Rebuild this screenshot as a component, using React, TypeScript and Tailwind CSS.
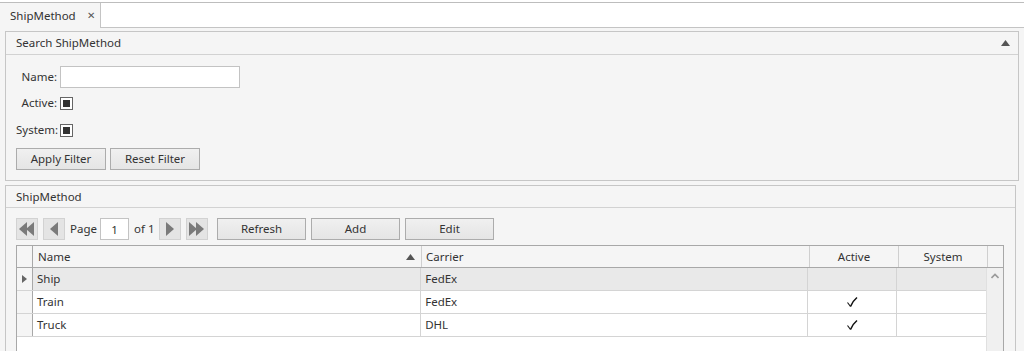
import React from "react";

const font = { fontFamily: '"Noto Sans", "Open Sans", sans-serif' };

function PagerButton({ dir, double }: { dir: "left" | "right"; double?: boolean }) {
  const tri = (x: number) =>
    dir === "left" ? `M${x + 8} 3 L${x} 10 L${x + 8} 17 Z` : `M${x} 3 L${x + 8} 10 L${x} 17 Z`;
  return (
    <button className="w-[22px] h-[22px] bg-[#e4e4e4] border border-[#d2d2d2] flex items-center justify-center">
      <svg width="20" height="20" viewBox="0 0 20 20">
        {double ? (
          <>
            <path d={tri(2)} fill="#7a7a7a" />
            <path d={tri(9)} fill="#7a7a7a" />
          </>
        ) : (
          <path d={tri(6)} fill="#7a7a7a" />
        )}
      </svg>
    </button>
  );
}

function Btn({ label, w }: { label: string; w: string }) {
  return (
    <button
      className={`${w} h-[22px] border border-[#acacac] bg-gradient-to-b from-[#f0f0f0] to-[#e5e5e5] text-[11.5px] text-[#333] leading-none`}
    >
      {label}
    </button>
  );
}

function Check() {
  return (
    <svg width="12" height="12" viewBox="0 0 12 12">
      <path d="M1.5 6.5 L4.5 10.5" stroke="#111" strokeWidth="1.1" fill="none" />
      <path d="M4.5 10.5 C6.5 6 8.5 3.5 11 1.5" stroke="#111" strokeWidth="1.6" fill="none" />
    </svg>
  );
}

function CheckBox() {
  return (
    <span className="w-[13px] h-[13px] bg-white border border-[#666] flex items-center justify-center">
      <span className="w-[7px] h-[7px] bg-[#333]" />
    </span>
  );
}

const rows = [
  { name: "Ship", carrier: "FedEx", active: false, current: true },
  { name: "Train", carrier: "FedEx", active: true, current: false },
  { name: "Truck", carrier: "DHL", active: true, current: false },
];

export default function App() {
  return (
    <div className="w-[1024px] h-[351px] overflow-hidden bg-white text-[11.5px] text-[#333]" style={font}>
      <div className="h-[2px]" />
      <div className="flex h-[26px] border-t border-[#bdbdbd]">
        <div className="w-[101px] bg-[#f5f5f5] border-r border-[#c4c4c4] flex items-center pl-[10px] gap-[11px]">
          <span>ShipMethod</span>
          <span className="text-[10px] text-[#555]">✕</span>
        </div>
        <div className="flex-1 border-b border-[#c4c4c4]" />
      </div>
      <div className="bg-[#f5f5f5] pl-[5px] pr-[5px] pt-[3px] h-[323px]">
        {/* Search panel */}
        <div className="border border-[#c6c6c6] w-[1014px]">
          <div className="h-[23px] border-b border-[#d2d2d2] flex items-center justify-between pl-[10px] pr-[8px]">
            <span>Search ShipMethod</span>
            <svg width="9" height="6" viewBox="0 0 9 6">
              <path d="M0 6 L4.5 0 L9 6 Z" fill="#555" />
            </svg>
          </div>
          <div className="pl-[10px] pt-[11px] pb-[10px]">
            <div className="flex items-center h-[22px]">
              <span className="w-[41px] text-right mr-[3px] whitespace-nowrap">Name:</span>
              <input className="w-[180px] h-[22px] bg-white border border-[#c3c3c3] outline-none" />
            </div>
            <div className="flex items-center h-[22px] mt-[4px]">
              <span className="w-[41px] text-right mr-[3px] whitespace-nowrap">Active:</span>
              <CheckBox />
            </div>
            <div className="flex items-center h-[22px] mt-[5px]">
              <span className="w-[41px] text-right mr-[3px] whitespace-nowrap">System:</span>
              <CheckBox />
            </div>
            <div className="flex gap-[4px] mt-[7px]">
              <Btn label="Apply Filter" w="w-[90px]" />
              <Btn label="Reset Filter" w="w-[90px]" />
            </div>
          </div>
        </div>

        {/* Grid panel */}
        <div className="border border-[#c6c6c6] w-[1011px] mt-[4px] h-[180px]">
          <div className="h-[22px] border-b border-[#d2d2d2] flex items-center pl-[10px]">ShipMethod</div>
          <div className="pl-[10px] pt-[10px]">
            <div className="flex items-center h-[22px]">
              <PagerButton dir="left" double />
              <span className="w-[5px]" />
              <PagerButton dir="left" />
              <span className="w-[35px] pl-[5px]">Page</span>
              <input
                defaultValue="1"
                className="w-[29px] h-[22px] bg-white border border-[#c3c3c3] text-center outline-none"
              />
              <span className="w-[30px] pl-[5px]">of 1</span>
              <PagerButton dir="right" />
              <span className="w-[5px]" />
              <PagerButton dir="right" double />
              <span className="w-[9px]" />
              <Btn label="Refresh" w="w-[89px]" />
              <span className="w-[5px]" />
              <Btn label="Add" w="w-[89px]" />
              <span className="w-[5px]" />
              <Btn label="Edit" w="w-[89px]" />
            </div>

            <div className="mt-[5px] w-[988px] border-l border-t border-r border-[#a8a8a8] bg-white h-[120px]">
              <div className="flex h-[22px] border-b border-[#a8a8a8] bg-[#f5f5f5]">
                <div className="w-[16px] border-r border-[#a8a8a8]" />
                <div className="w-[389px] border-r border-[#cfcfcf] flex items-center justify-between pl-[5px] pr-[6px]">
                  <span>Name</span>
                  <svg width="9" height="6" viewBox="0 0 9 6">
                    <path d="M0 6 L4.5 0 L9 6 Z" fill="#555" />
                  </svg>
                </div>
                <div className="w-[388px] border-r border-[#cfcfcf] flex items-center pl-[4px]">Carrier</div>
                <div className="w-[89px] border-r border-[#cfcfcf] flex items-center justify-center">Active</div>
                <div className="w-[89px] border-r border-[#cfcfcf] flex items-center justify-center">System</div>
                <div className="flex-1" />
              </div>
              <div className="flex">
                <div className="w-[969px]">
                  {rows.map((r) => (
                    <div
                      key={r.name}
                      className={`flex h-[23px] border-b border-[#d4d4d4] ${r.current ? "bg-[#e9e9e9]" : "bg-white"}`}
                    >
                      <div className="w-[16px] border-r border-[#a8a8a8] bg-[#f5f5f5] flex items-center justify-center">
                        {r.current && (
                          <svg width="5" height="8" viewBox="0 0 5 8">
                            <path d="M0 0 L5 4 L0 8 Z" fill="#666" />
                          </svg>
                        )}
                      </div>
                      <div className="w-[389px] border-r border-[#d4d4d4] flex items-center pl-[4px]">{r.name}</div>
                      <div className="w-[388px] border-r border-[#d4d4d4] flex items-center pl-[4px]">{r.carrier}</div>
                      <div className="w-[89px] border-r border-[#d4d4d4] flex items-center justify-center">
                        {r.active && <Check />}
                      </div>
                      <div className="w-[89px] flex items-center justify-center" />
                    </div>
                  ))}
                </div>
                <div className="flex-1 bg-[#f0f0f0] border-l border-[#e0e0e0] h-[97px] flex justify-center pt-[5px]">
                  <svg width="8" height="6" viewBox="0 0 8 6">
                    <path d="M0.5 5 L4 1.5 L7.5 5" stroke="#9a9a9a" strokeWidth="1.6" fill="none" />
                  </svg>
                </div>
              </div>
            </div>
          </div>
        </div>
      </div>
    </div>
  );
}
